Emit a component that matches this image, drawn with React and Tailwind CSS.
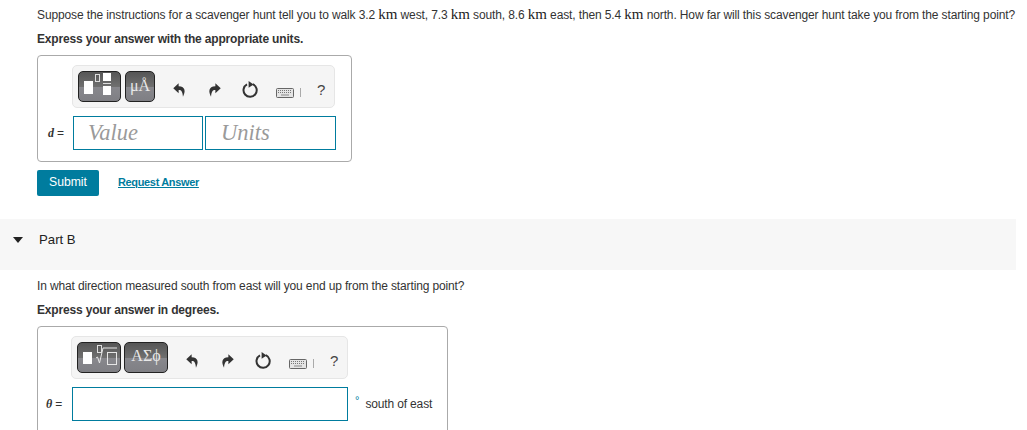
import React from "react";

const sans = "font-['Liberation_Sans',Arial,sans-serif]";
const serif = "font-['Liberation_Serif','Times_New_Roman',serif]";

function Km() {
  return <span className={`${serif} text-[15px] leading-none tracking-normal text-[#222]`}>km</span>;
}

function ToolIcons({ kbWidth }) {
  return (
    <div className="flex items-center text-[#333] ml-[18px] mt-[6px]">
      <svg width="13" height="14" viewBox="0 0 15 14" preserveAspectRatio="none" className="mr-[22px]">
        <path d="M6.5 0.3 L0.3 5.3 L6.5 10.2 L6.5 7 C9.5 6.8 11 8.5 11.5 13.7 C14.5 9 14.8 3.6 6.5 3.3 Z" fill="#333" />
      </svg>
      <svg width="13" height="14" viewBox="0 0 15 14" preserveAspectRatio="none" className="mr-[21px]">
        <path d="M8.5 0.3 L14.7 5.3 L8.5 10.2 L8.5 7 C5.5 6.8 4 8.5 3.5 13.7 C0.5 9 0.2 3.6 8.5 3.3 Z" fill="#333" />
      </svg>
      <svg width="16" height="17" viewBox="0 0 16 17" className="mr-[18px]">
        <path d="M5 3.4 A6.6 6.6 0 1 0 10.8 3.2" fill="none" stroke="#333" strokeWidth="2" />
        <path d="M6.6 0 L11.6 3.4 L6.6 6.8 Z" fill="#333" />
      </svg>
      <svg width={kbWidth} height="10" viewBox="0 0 18 10" preserveAspectRatio="none" className="mt-[6px] mr-[6px]">
        <rect x="0.5" y="0.5" width="17" height="9" rx="1" fill="#e4e4e4" stroke="#666" />
        <path d="M2 2.5h14M2 4.5h14" stroke="#777" strokeWidth="1" strokeDasharray="1 1" />
        <path d="M5 7h8" stroke="#888" strokeWidth="1" />
      </svg>
      <div className="w-px h-[9px] bg-[#aaa] mt-[6px] mr-[16px]" />
      <span className={`${sans} text-[15px] leading-none text-[#444]`}>?</span>
    </div>
  );
}

function TemplateButton({ className, children }) {
  return (
    <div className={`relative h-[31px] rounded-[5px] border border-[#222] overflow-hidden bg-[linear-gradient(#565656_0%,#6f6f6f_50%,#88888d_51%,#7f7f84_100%)] ${className}`}>
      {children}
    </div>
  );
}

function Hint({ children }) {
  return <p className="mt-[10px] text-[12px] leading-[14px] tracking-[-0.17px] font-bold text-[#333]">{children}</p>;
}

export default function App() {
  return (
    <div className={`${sans} w-[1027px] h-[430px] overflow-hidden bg-white text-[#333] pt-[7px]`}>
      <div className="pl-[37px]">
        <p className="text-[12px] leading-[14px] tracking-[-0.125px] whitespace-nowrap text-[#333]">
          Suppose the instructions for a scavenger hunt tell you to walk 3.2 <Km /> west, 7.3 <Km /> south, 8.6 <Km /> east, then 5.4 <Km /> north. How far will this scavenger hunt take you from the starting point?
        </p>
        <Hint>Express your answer with the appropriate units.</Hint>

        <div className="mt-[9px] w-[315px] h-[107px] border border-[#aaa] rounded-[4px] pt-[9px] pl-[34px]">
          <div className="w-[263px] h-[43px] bg-[#f5f5f5] border border-[#e6e6e6] rounded-[5px] flex items-center pl-[5px]">
            <TemplateButton className="w-[43px] mr-[4px]">
              <div className="absolute left-[5px] top-[9px] w-[9px] h-[13px] bg-white" />
              <div className="absolute left-[16px] top-[2px] w-[5px] h-[8px] border border-[#ddd]" />
              <div className="absolute left-[24px] top-[1px] w-[8px] h-[8px] bg-white" />
              <div className="absolute left-[24px] top-[11px] w-[8px] h-px bg-[#ddd]" />
              <div className="absolute left-[24px] top-[14px] w-[8px] h-[9px] bg-white" />
            </TemplateButton>
            <TemplateButton className="w-[30px]">
              <div className={`${serif} absolute inset-0 text-center text-[#e8e8e8] text-[16px] leading-[27px]`}>μÅ</div>
            </TemplateButton>
            <ToolIcons kbWidth={18} />
          </div>
          <div className="flex mt-[8px] -ml-[24px] items-stretch">
            <div className="w-[25px] flex items-center justify-start">
              <span className={`${serif} italic font-bold text-[12px] text-[#333]`}>d</span>
              <span className="text-[12px] ml-[3px]">=</span>
            </div>
            <div className={`${serif} italic w-[130px] h-[34px] border border-[#007c9e] text-[22.5px] leading-[32px] text-[#9a9a9a] pl-[14px]`}>Value</div>
            <div className={`${serif} italic ml-[2px] w-[131px] h-[34px] border border-[#007c9e] text-[22.5px] leading-[32px] text-[#9a9a9a] pl-[15px]`}>Units</div>
          </div>
        </div>

        <div className="mt-[8px] flex items-center">
          <div className="w-[62px] h-[26px] bg-[#007c9e] rounded-[2px] text-white text-[12.2px] leading-[24px] text-center">Submit</div>
          <span className="ml-[19px] -mt-[2px] text-[11px] tracking-[-0.35px] font-bold text-[#007c9e] underline">Request Answer</span>
        </div>
      </div>

      <div className="mt-[23px] w-[1016px] h-[51px] bg-[#f7f7f7] flex items-start pt-[13px]">
        <svg width="10" height="6" viewBox="0 0 10 6" className="ml-[13px] mt-[5px]">
          <path d="M0 0 H10 L5 6 Z" fill="#222" />
        </svg>
        <span className="ml-[16px] text-[13.2px] leading-[15px] text-[#222]">Part B</span>
      </div>

      <div className="pl-[37px] pt-[9px]">
        <p className="text-[12px] leading-[14px] tracking-[-0.14px] whitespace-nowrap text-[#333]">In what direction measured south from east will you end up from the starting point?</p>
        <Hint>Express your answer in degrees.</Hint>

        <div className="mt-[9px] w-[411px] h-[120px] border border-[#aaa] rounded-[4px] pt-[9px] pl-[33px]">
          <div className="w-[277px] h-[43px] bg-[#f5f5f5] border border-[#e6e6e6] rounded-[5px] flex items-center pl-[5px]">
            <TemplateButton className="w-[44px] mr-[3px]">
              <div className="absolute left-[5px] top-[9px] w-[9px] h-[12px] bg-white" />
              <div className="absolute left-[19px] top-[2px] w-[5px] h-[8px] border border-[#ddd]" />
              <svg width="24" height="22" viewBox="0 0 24 22" className="absolute left-[17px] top-[2px]">
                <path d="M1 13 L2.5 12 L4.5 18 L8 3 H22" fill="none" stroke="#e6e6e6" strokeWidth="1" />
                <rect x="12.5" y="7.5" width="9" height="12" fill="none" stroke="#e6e6e6" />
              </svg>
            </TemplateButton>
            <TemplateButton className="w-[44px]">
              <div className={`${serif} absolute inset-0 text-center text-[#e8e8e8] text-[16px] leading-[26px]`}>ΑΣϕ</div>
            </TemplateButton>
            <ToolIcons kbWidth={18} />
          </div>
          <div className="flex mt-[8px] -ml-[25px] items-center">
            <div className="w-[26px] flex items-center">
              <span className={`${serif} italic font-bold text-[12px] text-[#333]`}>θ</span>
              <span className="text-[12px] ml-[3px]">=</span>
            </div>
            <div className="w-[276px] h-[34px] border border-[#007c9e]" />
            <span className="ml-[7px] -mt-[8px] text-[11px] leading-none text-[#007c9e]">°</span>
            <span className="ml-[6px] text-[12px] tracking-[-0.15px] leading-[14px] text-[#333]">south of east</span>
          </div>
        </div>
      </div>
    </div>
  );
}
